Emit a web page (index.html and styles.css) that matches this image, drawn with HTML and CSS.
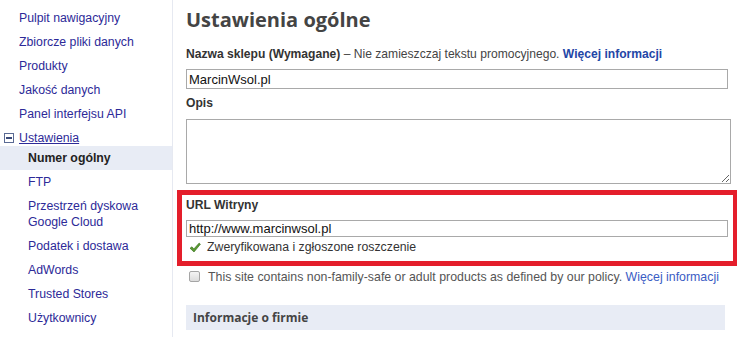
FILE: index.html
```html
<!DOCTYPE html>
<html lang="pl">
<head>
    <meta charset="utf-8">
    <title>Ustawienia ogólne</title>
    <link rel="stylesheet" href="styles.css">
</head>
<body>
    <div class="page">
        <ul class="sidebar">
            <li class="navitem"><a href="#">Pulpit nawigacyjny</a></li>
            <li class="navitem"><a href="#">Zbiorcze pliki danych</a></li>
            <li class="navitem"><a href="#">Produkty</a></li>
            <li class="navitem"><a href="#">Jakość danych</a></li>
            <li class="navitem"><a href="#">Panel interfejsu API</a></li>
            <li class="navgroup">
                <svg class="minus" width="10" height="10" viewBox="0 0 10 10">
                    <rect x="0.5" y="0.5" width="9" height="9" fill="#fff" stroke="#5a6a94"/>
                    <rect x="2" y="4" width="6" height="2" fill="#3a4a7a"/>
                </svg>
                <a href="#" class="grouplink">Ustawienia</a>
            </li>
            <li class="subitem active">Numer ogólny</li>
            <li class="subitem"><a href="#">FTP</a></li>
            <li class="subitem twoline"><a href="#">Przestrzeń dyskowa<br>Google Cloud</a></li>
            <li class="subitem"><a href="#">Podatek i dostawa</a></li>
            <li class="subitem"><a href="#">AdWords</a></li>
            <li class="subitem"><a href="#">Trusted Stores</a></li>
            <li class="subitem"><a href="#">Użytkownicy</a></li>
        </ul>

        <div class="main">
            <h1 class="title">Ustawienia ogólne</h1>

            <p class="label"><b>Nazwa sklepu (Wymagane)</b> – Nie zamieszczaj tekstu promocyjnego. <a href="#" class="morelink">Więcej informacji</a></p>
            <input class="textbox" type="text" value="MarcinWsol.pl">

            <p class="label label-opis"><b>Opis</b></p>
            <textarea class="textarea"></textarea>

            <div class="highlight">
                <p class="label label-url"><b>URL Witryny</b></p>
                <input class="textbox textbox-url" type="text" value="http://www.marcinwsol.pl">
                <p class="verified">
                    <svg class="check" width="12" height="11" viewBox="0 0 12 11">
                        <path d="M1 6.2 L3 4.8 L4.8 7 L10.2 1 L11.4 2.2 L5 10 Z" fill="#5a9a32" stroke="#2f6a14" stroke-width="0.6"/>
                    </svg>
                    <span>Zweryfikowana i zgłoszone roszczenie</span>
                </p>
            </div>

            <p class="adult"><span class="checkbox"></span>This site contains non-family-safe or adult products as defined by our policy. <a href="#" class="policylink">Więcej informacji</a></p>

            <div class="band">Informacje o firmie</div>
        </div>
    </div>
</body>
</html>
```

FILE: styles.css
```css
body {
    margin: 0;
    background-color: white;
    font-family: "Liberation Sans", Arial, sans-serif;
    font-size: 12.3px;
    color: #333;
}
.page {
    display: flex;
    height: 337px;
    overflow: hidden;
}
.sidebar {
    list-style: none;
    margin: 0;
    padding: 6px 0 0 0;
    width: 172px;
    border-right: 1px solid #e6e9f1;
    flex-shrink: 0;
}
.sidebar a {
    color: #2d2a98;
    text-decoration: none;
}
.navitem {
    line-height: 24px;
    padding-left: 19px;
}
.navgroup {
    display: flex;
    align-items: center;
    height: 17px;
    padding: 3px 0 0 4px;
    gap: 5px;
}
.sidebar .grouplink {
    text-decoration: underline;
}
.subitem {
    line-height: 24px;
    padding-left: 28px;
}
.subitem.active {
    background-color: #e8ecf5;
    font-weight: bold;
    color: #222;
}
.subitem.twoline {
    line-height: 16px;
    padding-top: 4px;
    padding-bottom: 4px;
}
.main {
    padding-left: 13px;
    width: 551px;
}
.title {
    margin: 0;
    padding-top: 7px;
    font-family: "Open Sans", sans-serif;
    font-size: 20px;
    font-weight: bold;
    line-height: 26px;
    color: #444;
}
.label {
    margin: 13px 0 0 0;
    line-height: 16px;
    color: #444;
    white-space: nowrap;
    font-size: 12.1px;
}
.label b {
    color: #333;
}
.morelink {
    color: #2346a6;
    font-weight: bold;
    text-decoration: none;
}
.textbox {
    display: block;
    box-sizing: border-box;
    width: 542px;
    height: 20px;
    margin-top: 7px;
    padding: 0 2px;
    border: 1px solid #a9a9a9;
    font-family: "Liberation Sans", Arial, sans-serif;
    font-size: 13px;
    color: #111;
}
.label-opis {
    margin-top: 6px;
}
.textarea {
    display: block;
    box-sizing: border-box;
    width: 545px;
    height: 65px;
    margin-top: 8px;
    border: 1px solid #a9a9a9;
    resize: vertical;
}
.highlight {
    margin: 6px 0 0 -9px;
    width: 547px;
    border: 5px solid #e41e2b;
    padding: 2px 0 6px 4px;
}
.label-url {
    margin-top: 0;
}
.textbox-url {
    height: 17px;
    line-height: 15px;
}
.verified {
    margin: 2px 0 0 0;
    line-height: 16px;
    padding-left: 3px;
    display: flex;
    align-items: center;
    gap: 6px;
    color: #333;
}
.adult {
    margin: 3px 0 0 0;
    line-height: 16px;
    padding-left: 3px;
    color: #555;
    white-space: nowrap;
    font-size: 12.35px;
}
.checkbox {
    display: inline-block;
    vertical-align: -1px;
    width: 9px;
    height: 9px;
    margin-right: 8px;
    border: 1px solid #a5a5a5;
    border-radius: 2px;
    background: linear-gradient(#f4f4f4, #dcdcdc);
}
.policylink {
    color: #3a5cc4;
    text-decoration: none;
}
.band {
    margin-top: 20px;
    width: 532px;
    height: 25px;
    line-height: 25px;
    padding-left: 7px;
    background-color: #e8ecf5;
    font-family: "Open Sans", sans-serif;
    font-weight: bold;
    font-size: 12px;
    color: #444;
}
```
